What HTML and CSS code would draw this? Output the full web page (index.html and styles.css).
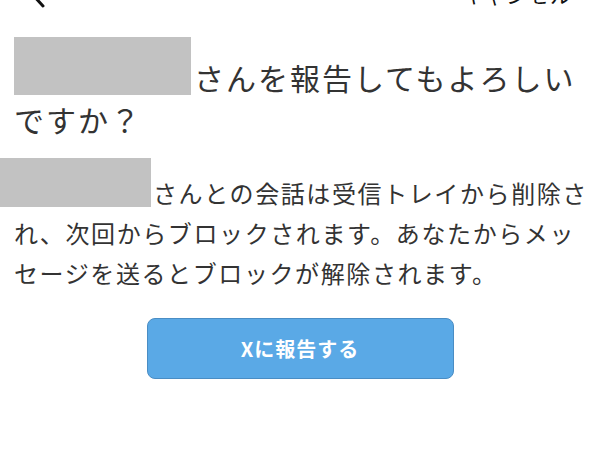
FILE: index.html
```html
<!DOCTYPE html>
<html lang="ja">
<head>
  <meta charset="UTF-8" />
  <title>報告</title>
  <meta name="viewport" content="width=device-width, initial-scale=1.0" />
  <link rel="stylesheet" href="styles.css">
</head>
<body>
  <div class="topbar">
    <svg class="back" width="16" height="28" viewBox="0 0 16 28">
      <polyline points="13,2 2,14 13,26" fill="none" stroke="#111" stroke-width="3" stroke-linecap="round" stroke-linejoin="round" />
    </svg>
    <span class="cancel">キャンセル</span>
  </div>

  <h1 class="title"><span class="redact redact-title"></span>さんを報告してもよろしいですか？</h1>

  <p class="desc"><span class="redact redact-desc"></span>さんとの会話は受信トレイから削除され、次回からブロックされます。あなたからメッセージを送るとブロックが解除されます。</p>

  <div class="actions">
    <button class="report-btn">Xに報告する</button>
  </div>
</body>
</html>
```

FILE: styles.css
```css
body {
  margin: 0;
  background: #fff;
  color: #333;
  font-family: "Noto Sans CJK JP", "Noto Sans", sans-serif;
  overflow: hidden;
}

.topbar {
  display: flex;
  justify-content: space-between;
  align-items: center;
  height: 48px;
  margin-top: -30px;
  padding: 0 28px 0 30px;
}

.cancel {
  font-size: 21px;
  color: #111;
  letter-spacing: 1px;
}

.title {
  margin: 19px 0 0;
  padding: 0 8px 0 14px;
  font-size: 30px;
  font-weight: normal;
  line-height: 42px;
  letter-spacing: 2px;
}

.redact {
  display: inline-block;
  background: #c2c2c2;
}

.redact-title {
  width: 177px;
  height: 58px;
  margin-right: 3px;
  vertical-align: -5px;
}

.desc {
  margin: 18px 0 0;
  padding: 0 10px 0 14px;
  font-size: 24px;
  line-height: 40px;
  letter-spacing: 1.6px;
}

.redact-desc {
  width: 151px;
  height: 49px;
  margin: 0 2px 0 -14px;
  vertical-align: -4px;
}

.actions {
  display: flex;
  justify-content: center;
  margin-top: 25px;
}

.report-btn {
  width: 307px;
  height: 61px;
  background: #5aa9e6;
  border: 1px solid #4a8dc4;
  border-radius: 8px;
  color: #fff;
  font-family: "Noto Sans CJK JP", sans-serif;
  font-size: 20px;
  font-weight: bold;
  letter-spacing: 1px;
}
```
